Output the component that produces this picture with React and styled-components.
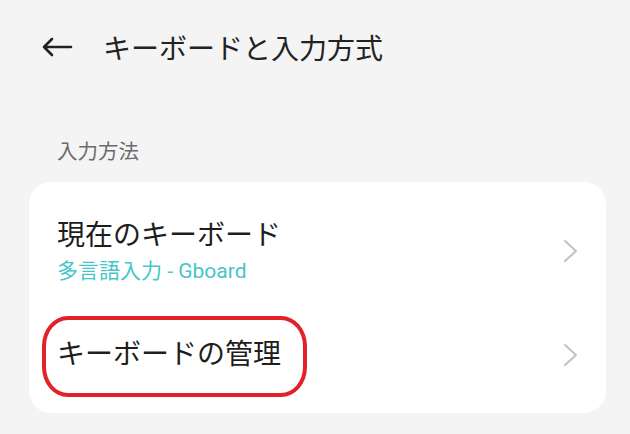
import React from 'react';
import styled, { createGlobalStyle } from 'styled-components';

const GlobalStyle = createGlobalStyle`
  html, body {
    margin: 0;
    padding: 0;
    background: #f4f4f4;
  }
  body {
    font-family: Roboto, "Noto Sans CJK JP", sans-serif;
    color: #1e1e1e;
  }
`;

const Page = styled.div`
  width: 630px;
  height: 434px;
  overflow: hidden;
  background: #f4f4f4;
`;

const Header = styled.div`
  display: flex;
  align-items: center;
  height: 94px;
  padding-left: 41px;
`;

const BackIcon = styled.svg`
  width: 32px;
  height: 20px;
  margin-right: 30px;
  flex-shrink: 0;
`;

const Title = styled.h1`
  margin: 0;
  font-size: 28px;
  font-weight: 400;
  color: #222;
`;

const SectionLabel = styled.div`
  padding: 44px 0 0 57px;
  font-size: 20.5px;
  line-height: 28px;
  color: #6b6b6b;
`;

const Card = styled.div`
  position: relative;
  display: flex;
  flex-direction: column;
  gap: 11px;
  margin: 16px 24px 0 29px;
  background: #fff;
  border-radius: 22px;
  padding: 21px 0 13px;
`;

const Row = styled.div`
  display: flex;
  align-items: center;
  justify-content: space-between;
  padding: 0 28px;
  height: ${p => p.$h}px;
`;

const RowText = styled.div`
  display: flex;
  flex-direction: column;
`;

const RowTitle = styled.div`
  font-size: 28px;
  line-height: 38px;
  color: #1e1e1e;
`;

const RowSub = styled.div`
  margin-top: 2px;
  font-size: 21px;
  line-height: 28px;
  color: #45c6c8;
`;

const Chevron = styled.svg`
  width: 15px;
  height: 24px;
  flex-shrink: 0;
`;

const Highlight = styled.div`
  position: absolute;
  left: 13px;
  top: 134px;
  width: 257px;
  height: 73px;
  border: 4px solid #e1222b;
  border-radius: 26px / 30px;
  pointer-events: none;
`;

const ChevronIcon = () => (
  <Chevron viewBox="0 0 15 24">
    <path d="M2 2 L13 12 L2 22" fill="none" stroke="#c2c2c2" strokeWidth="2" strokeLinecap="round" strokeLinejoin="round" />
  </Chevron>
);

export default function App() {
  return (
    <Page>
      <GlobalStyle />
      <Header>
        <BackIcon viewBox="0 0 32 20">
          <path d="M30 10 H3 M11 2 L3 10 L11 18" fill="none" stroke="#222" strokeWidth="2.6" strokeLinecap="round" strokeLinejoin="round" />
        </BackIcon>
        <Title>キーボードと入力方式</Title>
      </Header>
      <SectionLabel>入力方法</SectionLabel>
      <Card>
        <Row $h={96}>
          <RowText>
            <RowTitle>現在のキーボード</RowTitle>
            <RowSub>多言語入力 - Gboard</RowSub>
          </RowText>
          <ChevronIcon />
        </Row>
        <Row $h={90}>
          <RowText>
            <RowTitle>キーボードの管理</RowTitle>
          </RowText>
          <ChevronIcon />
        </Row>
        <Highlight />
      </Card>
    </Page>
  );
}
